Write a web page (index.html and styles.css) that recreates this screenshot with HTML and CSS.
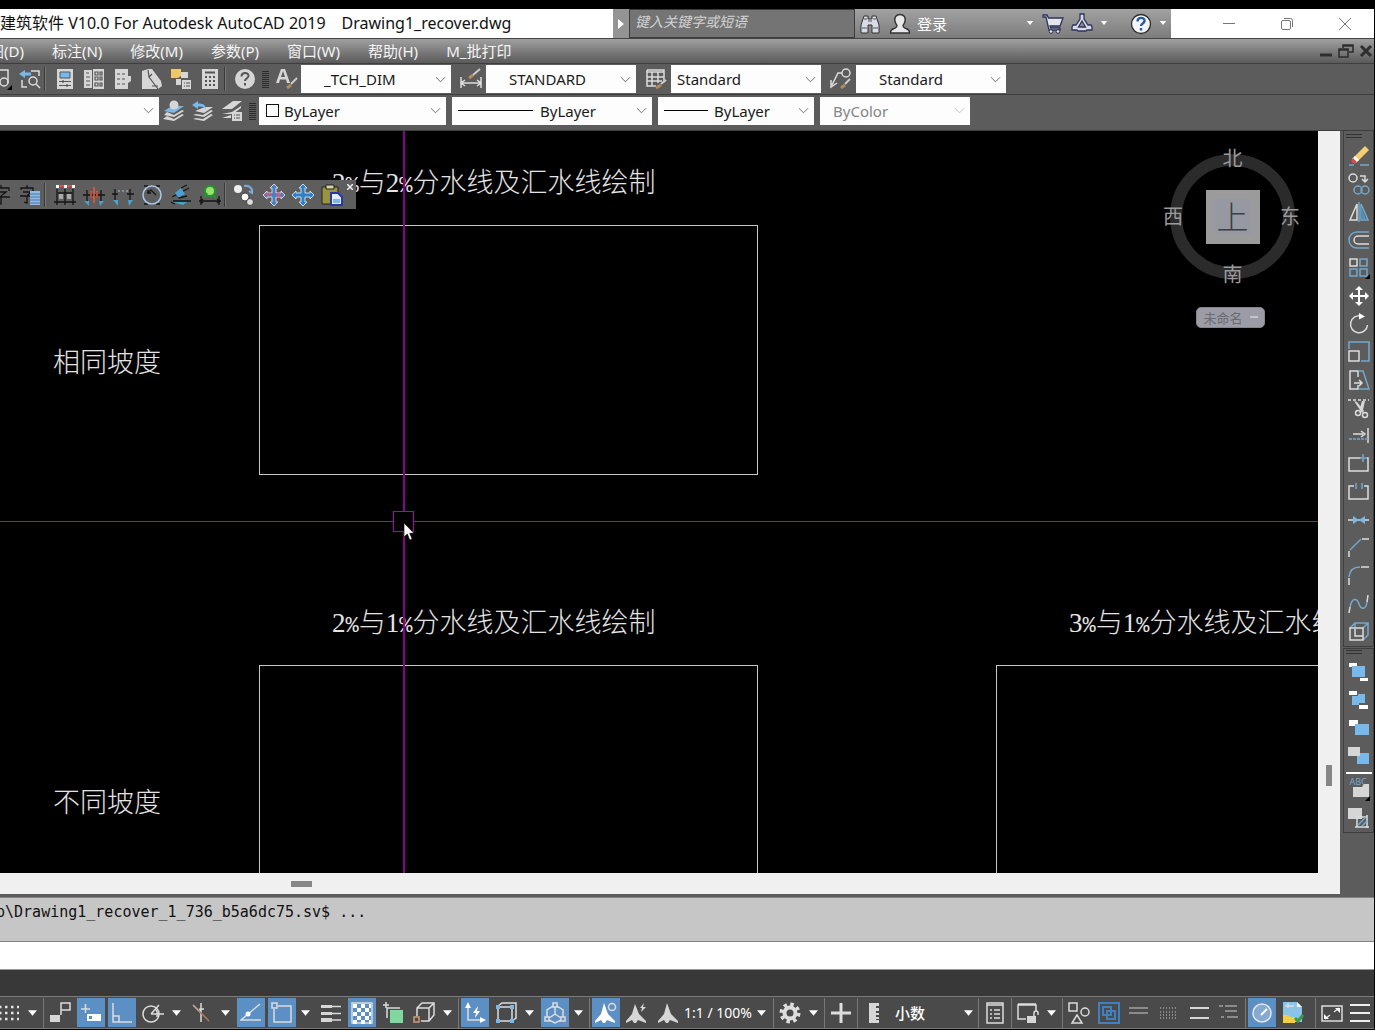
FILE: index.html
```html
<!DOCTYPE html>
<html lang="zh-CN">
<head>
<meta charset="utf-8">
<title>建筑软件 V10.0 For Autodesk AutoCAD 2019</title>
<link rel="stylesheet" href="styles.css">
</head>
<body>
<header class="titlebar">
  <h1 class="title"><span>建筑软件 V10.0 For Autodesk AutoCAD 2019</span><span>Drawing1_recover.dwg</span></h1>
  <div class="search">
    <button class="search-toggle" aria-label="折叠"><svg width="6" height="10" viewBox="0 0 6 10"><path class="fw" d="M0 0l6 5-6 5z"/></svg></button>
    <input class="search-box" type="text" aria-label="搜索" placeholder="键入关键字或短语">
  </div>
  <div class="info">
    <button class="tool" aria-label="查找"><svg viewBox="0 0 22 22"><path fill="#d8dce6" stroke="#333" d="M5 3h4v3h4V3h4l3 9v8h-7v-8H9v8H2v-8z"/><path class="dk" d="M3 15h5M14 15h5M5 6h3M14 6h3M9 8h4"/></svg></button>
    <button class="login"><svg viewBox="0 0 22 22"><path fill="#e8e8ec" stroke="#333" stroke-width="1.4" d="M11 1.500c4 0 6 3 5 7-.5 2-1.500 3-2 4 0 2 1 2 3 3 2 .7 3.500 1.500 3.500 4.500h-19c0-3 1.500-3.800 3.500-4.500 2-1 3-1 3-3-.5-1-1.500-2-2-4-1-4 1-7 5-7z"/></svg>登录</button>
    <span class="info-fill"></span>
    <button class="drop" aria-label="登录选项"><svg class="tri-s" viewBox="0 0 10 6"><path class="fw" d="M1 0h8L5 5z"/></svg></button>
    <button class="tool" aria-label="应用商店"><svg viewBox="0 0 22 22"><path fill="#e4e6ee" stroke="#2e3558" stroke-width="1.300" d="M1 2h4l1.500 3H21l-3 8H8l.5 2H18v2H7L4 4H1z"/><circle cx="9" cy="18.500" r="1.800" fill="#e4e6ee" stroke="#2e3558"/><circle cx="16" cy="18.500" r="1.800" fill="#e4e6ee" stroke="#2e3558"/></svg></button>
    <button class="tool" aria-label="Autodesk"><svg viewBox="0 0 22 22"><path fill="#d8dce8" stroke="#2e3558" stroke-width="1.300" d="M9 1h4v5l4 6h3l1 2v3h-5l-1 1H7l-1-1H1v-3l1-2h3l4-6z"/><path fill="#8e8e8e" stroke="#2e3558" stroke-width="1.300" d="M11 8l3.500 6h-7z"/></svg></button>
    <button class="drop" aria-label="Autodesk 选项"><svg class="tri-s" viewBox="0 0 10 6"><path class="fw" d="M1 0h8L5 5z"/></svg></button>
    <span class="info-gap"></span>
    <button class="tool" aria-label="帮助"><svg viewBox="0 0 22 22"><circle cx="11" cy="11" r="9.500" fill="#f4f6fa" stroke="#2b2b2b" stroke-width="1.300"/><path d="M7.500 8.500c0-5 7.500-4.500 7-.5-.3 2.500-3.500 2.500-3.500 5M11 15v2.500" fill="none" stroke="#2a5aa8" stroke-width="2.400"/></svg></button>
    <button class="drop" aria-label="帮助选项"><svg class="tri-s" viewBox="0 0 10 6"><path class="fw" d="M1 0h8L5 5z"/></svg></button>
  </div>
  <div class="winctl">
    <button aria-label="最小化"><svg viewBox="0 0 14 14"><path d="M1 6.500h12"/></svg></button>
    <button aria-label="还原"><svg viewBox="0 0 14 14"><rect x="1.500" y="3.500" width="9" height="9" rx="1.500"/><path d="M4 1.500h6.500a2 2 0 0 1 2 2V10"/></svg></button>
    <button aria-label="关闭"><svg viewBox="0 0 14 14"><path d="M1 1l12 12M13 1L1 13"/></svg></button>
  </div>
</header>

<nav class="menubar">
  <div class="menus">
    <button>绘图(D)</button><button>标注(N)</button><button>修改(M)</button><button>参数(P)</button><button>窗口(W)</button><button>帮助(H)</button><button>M_批打印</button>
  </div>
  <div class="docctl">
    <button aria-label="最小化图形"><svg viewBox="0 0 16 16"><path d="M2 12h12" stroke-width="3"/></svg></button>
    <button aria-label="还原图形"><svg viewBox="0 0 16 16"><path d="M1 6h9v8H1zM1 7h9M5 5V2h10v7h-4M5 3h10" stroke-width="1.600"/></svg></button>
    <button aria-label="关闭图形"><svg viewBox="0 0 16 16"><path d="M3 3l10 10M13 3L3 13" stroke-width="3"/></svg></button>
  </div>
</nav>

<section class="toolbars">
  <div class="bar bar-top">
    <div class="tools tools-cut">
      <button class="tool" aria-label="窗口缩放"><svg viewBox="0 0 22 22"><path class="s" d="M1 2h17v13M1 2v15h8"/><circle class="s" cx="14" cy="14" r="4"/><path class="fk" d="M22 17v5h-5z"/></svg></button>
      <button class="tool" aria-label="缩放上一个"><svg viewBox="0 0 22 22"><path class="s" d="M12 3h8v5M3 12v7h5"/><circle class="s" cx="14" cy="13" r="4"/><path class="s" d="M17 16l4 4"/><path class="fb" d="M0 6l6-4v2.500h6v3H6V10z"/></svg></button>
      <i class="sep"></i>
      <button class="tool" aria-label="特性"><svg viewBox="0 0 22 22"><path class="f" d="M3 1h16v20H3z"/><path class="fb" stroke="#555" d="M6 4h10v6H6z"/><path class="dk" d="M5 13.500h12M5 17.500h12M9 12v3M13 16v3"/></svg></button>
      <button class="tool" aria-label="设计中心"><svg viewBox="0 0 22 22"><path class="f" d="M1 2h8v18H1zM10 1h11v20H10z"/><path class="dk" d="M3 5h3M3 9h4M3 13h4M3 17h4M12 4h3v3h-3zM17 4h2v3h-2zM12 9h3v3h-3zM17 9h2v3h-2zM12 15h3v3h-3zM17 15h2v3h-2z"/></svg></button>
      <button class="tool" aria-label="工具选项板"><svg viewBox="0 0 22 22"><path class="f" d="M3 1h13v7h3v5l-3 2v6H3z"/><path class="dk" stroke-width="2" d="M5 6h3M10 6h3M5 11h3M10 11h3M5 16h3M10 16h3"/></svg></button>
      <button class="tool" aria-label="图纸集"><svg viewBox="0 0 22 22"><path class="f" d="M1 3l6-2h4l9 12 1 5-4 3H1z"/><path class="dk" d="M7 2l1 7 9 12M8 9l3-3M11 18h6"/></svg></button>
      <button class="tool" aria-label="标记集"><svg viewBox="0 0 22 22"><path fill="#f0c66a" d="M1 1h10v7l-3 2H1z"/><path class="f" d="M11 4h7v6h-7zM6 11h5v6H6zM12 12h9v9h-9z"/><path class="dk" d="M14 15h1M16 15h4M14 18h1M16 18h4"/></svg></button>
      <button class="tool" aria-label="计算器"><svg viewBox="0 0 22 22"><path class="f" d="M3 1h16v20H3z"/><path class="dk wide" d="M6 4.500h10M6 9h2M10 9h2M14 9h2M6 13h2M10 13h2M14 13h2M6 17h2M10 17h2M14 17h2"/></svg></button>
      <i class="sep"></i>
      <button class="tool" aria-label="帮助"><svg viewBox="0 0 22 22"><circle class="f" cx="11" cy="11" r="10"/><path class="dk wide" d="M7.500 8.500c0-5 7.500-4.500 7-.5-.3 2.500-3.500 2.500-3.500 5M11 15v2.500"/></svg></button>
    </div>
    <i class="grip"></i>
    <button class="tool" aria-label="文字样式"><svg viewBox="0 0 22 22"><path class="f" fill-rule="evenodd" d="M0 15L5 1h4l5 14h-3l-1-3.500H4L3 15zM5 9h4L7 3z"/><path stroke="#b58a5a" stroke-width="3" d="M11 20l4-3"/><path stroke="#ccc" stroke-width="2" d="M15 16l6-6"/></svg></button>
    <label class="combo combo-pad w150"><select aria-label="文字样式列表"><option>_TCH_DIM</option></select><svg class="chev" viewBox="0 0 12 7"><path d="M1 1l5 5 5-5"/></svg></label>
    <button class="tool tool-lead" aria-label="标注样式"><svg viewBox="0 0 22 22"><path class="s" d="M1 9v11M21 9v11M1 15h20M5 12l-4 3 4 3M17 12l4 3-4 3"/><path stroke="#b58a5a" stroke-width="3" d="M9 10l4-3"/><path stroke="#ccc" stroke-width="2" d="M13 7l7-6"/></svg></button>
    <label class="combo combo-pad w150"><select aria-label="标注样式列表"><option>STANDARD</option></select><svg class="chev" viewBox="0 0 12 7"><path d="M1 1l5 5 5-5"/></svg></label>
    <button class="tool tool-lead" aria-label="表格样式"><svg viewBox="0 0 22 22"><path class="s" d="M2 2h17v12M2 2v16h9M2 4h17M2 9h17M2 13h15M7 4v14M13 4v11"/><path stroke="#b58a5a" stroke-width="3" d="M11 20l5-3"/><path stroke="#ccc" stroke-width="2" d="M16 16l5-4"/></svg></button>
    <label class="combo w150"><select aria-label="表格样式列表"><option>Standard</option></select><svg class="chev" viewBox="0 0 12 7"><path d="M1 1l5 5 5-5"/></svg></label>
    <button class="tool tool-lead" aria-label="引线样式"><svg viewBox="0 0 22 22"><circle class="s" cx="16" cy="5" r="4"/><path class="s" d="M12 5H8L2 17M1 12v7l6-4"/><path stroke="#b58a5a" stroke-width="3" d="M11 20l4-3"/><path stroke="#ccc" stroke-width="2" d="M15 16l5-5"/></svg></button>
    <label class="combo combo-pad w150"><select aria-label="引线样式列表"><option>Standard</option></select><svg class="chev" viewBox="0 0 12 7"><path d="M1 1l5 5 5-5"/></svg></label>
  </div>
  <div class="bar">
    <label class="combo w160"><select aria-label="图层"><option></option></select><svg class="chev" viewBox="0 0 12 7"><path d="M1 1l5 5 5-5"/></svg></label>
    <div class="tools">
      <button class="tool" aria-label="置为当前图层"><svg viewBox="0 0 22 22"><path class="f" d="M4 16l-4 3 11 2 10-6-2-1-8 5z"/><path class="f" d="M4 12l-3 3 10 2 10-6-2-1-8 5z"/><path class="fb" d="M1 11L9 6h12L11 13z"/><circle class="f" cx="11" cy="5" r="4.500"/></svg></button>
      <button class="tool" aria-label="上一个图层"><svg viewBox="0 0 22 22"><path class="f" d="M4 18l-3 1 11 2 9-6-2-1-8 5zM4 14l-3 1 11 2 9-6-2-1-8 5zM3 11l5-2 5-2h8L12 13z"/><path class="fb" d="M0 5l6-4v2.500c6 0 8 2 8 6-2-3-4-3-8-3V9z"/></svg></button>
      <button class="tool" aria-label="图层状态"><svg viewBox="0 0 22 22"><path class="f" d="M1 9L12 1h9L11 9zM1 14l10-2 9-6v2l-8 6zM1 18h9v-3zM11 12h10v9H11z"/><path class="dk" d="M13 15h1M15 15h4M13 18h1M15 18h4"/></svg></button>
    </div>
    <i class="grip"></i>
    <label class="combo combo-color w188"><select aria-label="颜色"><option>ByLayer</option></select><i class="swatch"></i><svg class="chev" viewBox="0 0 12 7"><path d="M1 1l5 5 5-5"/></svg></label>
    <label class="combo combo-type w200"><select aria-label="线型"><option>ByLayer</option></select><i class="line line-long"></i><svg class="chev" viewBox="0 0 12 7"><path d="M1 1l5 5 5-5"/></svg></label>
    <label class="combo combo-weight w156"><select aria-label="线宽"><option>ByLayer</option></select><i class="line"></i><svg class="chev" viewBox="0 0 12 7"><path d="M1 1l5 5 5-5"/></svg></label>
    <label class="combo combo-off w150"><select aria-label="打印样式" disabled><option>ByColor</option></select><svg class="chev" viewBox="0 0 12 7"><path d="M1 1l5 5 5-5"/></svg></label>
  </div>
</section>

<main class="work">
  <div class="view">
    <div class="canvas">
      <svg class="drawing" width="100%" height="100%"><g fill="none" stroke="#c8c8c8"><rect x="259.500" y="94.500" width="498" height="249"/><rect x="259.500" y="534.500" width="498" height="249"/><rect x="996.500" y="534.500" width="498" height="249"/></g></svg>
      <p class="note head-a">2<b>%</b>与2<b>%</b>分水线及汇水线绘制</p>
      <p class="note head-b">2<b>%</b>与1<b>%</b>分水线及汇水线绘制</p>
      <p class="note head-c">3<b>%</b>与1<b>%</b>分水线及汇水线绘制</p>
      <p class="note side-a">相同坡度</p>
      <p class="note side-b">不同坡度</p>
      <div class="compass">
        <span class="north">北</span><span class="west">西</span><button class="cube">上</button><span class="east">东</span><span class="south">南</span>
      </div>
      <button class="ucs">未命名<svg width="8" height="4" viewBox="0 0 8 4"><path d="M0 1h8" stroke="#c4c4cc" stroke-width="2"/></svg></button>
      <i class="cross-h"></i><i class="cross-v"></i><i class="pick"></i>
      <svg class="cursor" width="12" height="19" viewBox="0 0 12 19"><path fill="#fff" stroke="#000" stroke-width=".6" d="M1 1v14l3.300-3 2.500 6 2.400-1-2.500-5.700H11z"/></svg>
      <div class="floating">
        <button class="tool" aria-label="单行文字"><svg viewBox="0 0 22 22"><path class="ink" d="M3 6V4h16v3M11 1v3M6 8h10l-5 4v8l-3-1M2 13h18"/></svg></button>
        <button class="tool" aria-label="多行文字"><svg viewBox="0 0 22 22"><path class="ink" d="M2 6V4h12v3M8 1v3M4 8h8L8 12v7l-3-1M1 12h13"/><path fill="#8ebbe8" d="M11 7h10v14H11z"/><path stroke="#5276a0" d="M11 10h10M11 13h10M11 16h10M11 19h10"/></svg></button>
        <i class="sep"></i>
        <button class="tool" aria-label="门窗标注"><svg viewBox="0 0 22 22"><path class="ink" d="M3 5v16M11 5v16M19 5v16M0 18h22M4 9h14"/><path fill="#aaa" d="M5 10h4v5H5zM13 10h4v5h-4z"/><path stroke="#e44" stroke-width="2" d="M2 2h19"/><path fill="#fff" d="M2 1h3v3H2zM10 1h3v3h-3zM18 1h3v3h-3z"/></svg></button>
        <button class="tool" aria-label="墙厚标注"><svg viewBox="0 0 22 22"><path class="ink" d="M4 6v11M18 6v11M0 11h22M8 8v6M14 8v6"/><path d="M11 3v16M8 7v7M14 7v7" stroke="#f05a3c" stroke-width="1.500"/><path fill="#4aa0d0" d="M1 17h5v5zM16 17h5l-4 5z"/></svg></button>
        <button class="tool" aria-label="两点标注"><svg viewBox="0 0 22 22"><path class="ink" d="M3 5v11M18 5v11M0 10h6M15 10h7"/><path stroke="#9cc" stroke-dasharray="2 2" d="M6 7h10"/><path fill="#4aa0d0" d="M1 16h5v6zM16 16h5l-4 6z"/></svg></button>
        <button class="tool" aria-label="半径标注"><svg viewBox="0 0 22 22"><path class="ink" d="M3 2h4M15 2h4M3 20h4M15 20h4M6 9l4-3 5 5M7 6v3h3"/><circle cx="11" cy="11" r="9" fill="none" stroke="#a8c4e6" stroke-width="1.600"/></svg></button>
        <button class="tool" aria-label="尺寸编辑"><svg viewBox="0 0 22 22"><path class="ink" d="M2 13L19 4M3 17h18M8 14l5-3M1 18l4 2"/><path fill="#4aa0d0" d="M5 9l6-5 4 6-6 4zM2 18h15l-4 3z"/><path class="ink" d="M11 4l6-3M9 14l8-2"/></svg></button>
        <button class="tool" aria-label="坐标标注"><svg viewBox="0 0 22 22"><path class="ink" d="M2 12v9M20 12v9M0 17h22M4 15l-3 2 3 2M18 15l3 2-3 2"/><circle cx="11" cy="7" r="5" fill="#9be070" stroke="#1f9a28" stroke-width="2"/><path stroke="#1f9a28" stroke-width="2" d="M5 13l3-4M14 11l3 3"/></svg></button>
        <i class="sep"></i>
        <button class="tool" aria-label="替换"><svg viewBox="0 0 22 22"><path fill="none" stroke="#78aee0" stroke-width="2" d="M10 2c6-1 9 3 8 7l-3-2"/><circle cx="4" cy="5" r="4" fill="#eee"/><circle cx="11" cy="13" r="4" fill="#fff" stroke="#444"/><circle cx="16" cy="18" r="3.500" fill="#ddd" stroke="#444"/></svg></button>
        <button class="tool" aria-label="移动复制"><svg viewBox="0 0 22 22"><path fill="#3d85c8" stroke="#e6cada" d="M11 0l4 4h-2v5h5V7l4 4-4 4v-2h-5v5h2l-4 4-4-4h2v-5H4v2l-4-4 4-4v2h5V4H7z"/><path fill="#e0507a" d="M4 8l-3 3 3 3v-2h5V9H4zM13 9h5v4h-5z" opacity=".7"/></svg></button>
        <button class="tool" aria-label="移动"><svg viewBox="0 0 22 22"><path fill="#2f80c8" stroke="#c4dcf0" d="M11 0l4 4h-2v5h5V7l4 4-4 4v-2h-5v5h2l-4 4-4-4h2v-5H4v2l-4-4 4-4v2h5V4H7z"/></svg></button>
        <button class="tool" aria-label="粘贴"><svg viewBox="0 0 22 22"><path fill="#9a9440" stroke="#222" d="M1 3h16v17H1z"/><path fill="#d8d4a0" stroke="#222" d="M5 1h8v4H5z"/><path fill="#e8e8ff" stroke="#2838a8" stroke-width="2" d="M10 9h7l4 4v8H10z"/><path class="fb" d="M12 15h7v4h-7z"/></svg></button>
        <button class="close" aria-label="关闭工具栏"><svg width="6" height="6" viewBox="0 0 6 6"><path d="M0 0l6 6M6 0L0 6" stroke="#eee" stroke-width="1.500"/></svg></button>
      </div>
    </div>
    <div class="vscroll"><i></i></div>
    <div class="hscroll"><i></i></div>
  </div>
  <aside class="side">
    <div class="panel">
      <i class="grip-h"></i>
      <button class="tool" aria-label="删除"><svg viewBox="0 0 22 22"><path class="sb" d="M1 20h5M12 20h9"/><path fill="#f3cf72" d="M17 1l4 4L10 16l-4-4z"/><path fill="#fff" d="M7 11l4 4-3 3-4-4z"/><path fill="#e04850" d="M5 13l4 4-3 2-3-3z"/></svg></button>
      <button class="tool" aria-label="复制"><svg viewBox="0 0 22 22"><circle class="s" cx="5" cy="5" r="4"/><path class="s" d="M12 3h5v5M14 6l3 3 3-3"/><circle class="sb" cx="10" cy="17" r="4"/><circle class="sb" cx="17" cy="17" r="4"/></svg></button>
      <button class="tool" aria-label="镜像"><svg viewBox="0 0 22 22"><path class="s" d="M9 3v16H2z"/><path class="sb" d="M13 3v16h7zM11 1v20" /><path fill="#528fb8" d="M13 5v13h5z"/></svg></button>
      <button class="tool" aria-label="偏移"><svg viewBox="0 0 22 22"><path class="sb" stroke-width="2" d="M21 3H9a8 8 0 0 0 0 16h12"/><path class="s" d="M21 7H10a4 4 0 0 0 0 8h11"/></svg></button>
      <button class="tool" aria-label="阵列"><svg viewBox="0 0 22 22"><path class="s" d="M2 2h7v7H2z"/><path class="sb" d="M12 2h7v7h-7zM2 12h7v7H2zM12 12h7v7h-7z"/><path class="fk" d="M22 17v5h-5z"/></svg></button>
      <button class="tool" aria-label="移动"><svg viewBox="0 0 22 22"><path class="fw" d="M11 1l4 4h-3v5h5V7l4 4-4 4v-3h-5v5h3l-4 4-4-4h3v-5H5v3l-4-4 4-4v3h5V5H7z"/></svg></button>
      <button class="tool" aria-label="旋转"><svg viewBox="0 0 22 22"><path class="s" d="M13 3A8.500 8.500 0 1 0 19.500 12"/><path class="fw" d="M11 0l6 3.500-6 3z"/></svg></button>
      <button class="tool" aria-label="缩放"><svg viewBox="0 0 22 22"><path class="sb" d="M1 8V1h20v19h-8"/><path class="s" d="M1 10h10v10H1z"/></svg></button>
      <button class="tool" aria-label="拉伸"><svg viewBox="0 0 22 22"><path class="s" d="M10 8V2H2v18h8v-4"/><path class="sb" d="M11 2h4l6 18H11"/><path class="s" d="M6 14h8M11 11l3 3-3 3"/></svg></button>
      <button class="tool" aria-label="修剪"><svg viewBox="0 0 22 22"><path class="s" stroke-dasharray="3 2" d="M0 3h21"/><path class="f" d="M6 4l3 1 7 9-2 2zM14 4h3l-2 9-3-2z"/><circle class="s" cx="10" cy="16" r="2.500"/><circle class="s" cx="17" cy="18" r="2.500"/></svg></button>
      <button class="tool" aria-label="延伸"><svg viewBox="0 0 22 22"><path class="s" d="M20 3v15M5 9h10M13 6l4 3-4 3"/><path class="sb" stroke-dasharray="3 1" d="M1 14h19"/></svg></button>
      <button class="tool" aria-label="打断于点"><svg viewBox="0 0 22 22"><path class="s" d="M13 5H1v13h19V5h-1"/><path class="sb" d="M15 1v8M12 5h7"/></svg></button>
      <button class="tool" aria-label="打断"><svg viewBox="0 0 22 22"><path class="s" d="M6 5H1v13h19V5h-4"/><path class="sb" d="M8 2v6M14 2v6"/></svg></button>
      <button class="tool" aria-label="合并"><svg viewBox="0 0 22 22"><path class="s" d="M0 11h21"/><path class="fb" d="M5 7l6 4-6 4zM17 7l-6 4 6 4z"/></svg></button>
      <button class="tool" aria-label="倒角"><svg viewBox="0 0 22 22"><path class="s" d="M1 20v-6M14 2h7"/><path class="sb" d="M2 13L13 2"/></svg></button>
      <button class="tool" aria-label="圆角"><svg viewBox="0 0 22 22"><path class="s" d="M1 20v-7M13 2h8"/><path class="sb" d="M1 12Q2 2 12 2"/></svg></button>
      <button class="tool" aria-label="光顺曲线"><svg viewBox="0 0 22 22"><path class="s" d="M1 20l1-6M19 9l1-7"/><path class="sb" d="M2 14c2-10 7-9 9-3s7 6 8-2"/></svg></button>
      <button class="tool" aria-label="分解"><svg viewBox="0 0 22 22"><path class="sb" d="M2 7l5-5h13v12l-5 5M15 7l5-5M7 2v5"/><path class="s" d="M2 7h13v12H2zM7 8v7h8"/></svg></button>
    </div>
    <div class="panel panel-order">
      <i class="grip-h"></i>
      <button class="tool" aria-label="前置"><svg viewBox="0 0 22 22"><path class="fw" d="M1 2h8v4H1zM12 17h8v3h-8z"/><path class="fb" d="M4 5h13v11H4z"/></svg></button>
      <button class="tool" aria-label="后置"><svg viewBox="0 0 22 22"><path class="fw" d="M1 2h8v4H1zM11 16h9v4h-9z"/><path class="fb" d="M4 7h6V5h7v9h-6v2H4z"/></svg></button>
      <button class="tool" aria-label="置于对象之上"><svg viewBox="0 0 22 22"><path class="fw" d="M1 3h9v6H1z"/><path class="fb" d="M7 7h14v11H7z"/></svg></button>
      <button class="tool" aria-label="置于对象之下"><svg viewBox="0 0 22 22"><path class="fb" d="M9 8h12v11H9z"/><path class="f" d="M0 2h12v9H0z"/></svg></button>
      <i class="rule"></i>
      <button class="tool tool-abc" aria-label="文字前置"><span>ABC</span><svg viewBox="0 0 22 22"><path class="f" d="M5 8h9l2-3h5v13H5z"/><path class="fk" d="M22 17v5h-5z"/></svg></button>
      <button class="tool" aria-label="图案填充后置"><svg viewBox="0 0 22 22"><path class="f" d="M0 1h14v11H0z"/><path class="s" d="M9 10h10v10H9zM7 20h14M19 8v13"/><path class="sb" d="M10 18l8-8M14 19l5-5"/></svg></button>
    </div>
  </aside>
</main>

<section class="command">
  <output class="history">p\Drawing1_recover_1_736_b5a6dc75.sv$ ...</output>
  <input class="prompt" type="text" aria-label="命令">
</section>

<footer class="status">
  <div class="pair"><button class="st" aria-label="栅格"><svg viewBox="0 0 22 22"><path fill="none" stroke="#e4e4e4" stroke-width="2.500" stroke-dasharray="2.500 3.500" d="M1 5h20M1 11h20M1 17h20"/></svg></button><button class="dd" aria-label="栅格选项"><svg viewBox="0 0 10 6"><path class="fw" d="M0 0h10L5 6z"/></svg></button></div>
  <i class="vs"></i>
  <button class="st" aria-label="推断约束"><svg viewBox="0 0 22 22"><path class="s" d="M12 8V1h9v7h-9v5"/><path class="f" d="M1 13h10v7H1z"/></svg></button>
  <button class="st on" aria-label="动态输入"><svg viewBox="0 0 22 22"><path class="s" d="M1 7h9M5.500 2v9"/><path class="fw" d="M7 12h14v7H7z"/><path fill="#5c8fc4" d="M9 14h3v3H9z"/></svg></button>
  <button class="st on" aria-label="正交"><svg viewBox="0 0 22 22"><path class="s" d="M2 1v19h19M2 14h6v6"/></svg></button>
  <div class="pair"><button class="st" aria-label="极轴"><svg viewBox="0 0 22 22"><circle class="s" cx="9" cy="12" r="8"/><path class="s" d="M9 12h13M9 12l8-9M13 7q3 2 2 8"/></svg></button><button class="dd" aria-label="极轴选项"><svg viewBox="0 0 10 6"><path class="fw" d="M0 0h10L5 6z"/></svg></button></div>
  <div class="pair"><button class="st" aria-label="等轴测"><svg viewBox="0 0 22 22"><path class="s" d="M10 1v19M13 7h-4v4"/><path stroke="#a87860" stroke-width="1.500" d="M2 3l16 16"/><path class="s" opacity=".5" d="M2 3l6 6"/></svg></button><button class="dd" aria-label="等轴测选项"><svg viewBox="0 0 10 6"><path class="fw" d="M0 0h10L5 6z"/></svg></button></div>
  <button class="st on" aria-label="对象捕捉追踪"><svg viewBox="0 0 22 22"><path class="s" d="M20 2L1 18h20"/><circle class="fw" cx="8" cy="12" r="2.500"/></svg></button>
  <div class="pair"><button class="st on" aria-label="对象捕捉"><svg viewBox="0 0 22 22"><path class="s" d="M7 4h13v16H3V7"/><path class="s" d="M1 1h5v5H1z"/></svg></button><button class="dd" aria-label="捕捉选项"><svg viewBox="0 0 10 6"><path class="fw" d="M0 0h10L5 6z"/></svg></button></div>
  <button class="st" aria-label="线宽"><svg viewBox="0 0 22 22"><path class="f" d="M1 3h11v3H1zM1 10h11v3H1zM1 16h11v4H1z"/><path class="s" d="M12 4.500h9M12 11.500h9M12 18h9"/></svg></button>
  <button class="st on" aria-label="透明度"><svg viewBox="0 0 22 22"><path class="s" d="M1 1h20v20H1z"/><path fill="none" stroke="#fff" stroke-width="4" stroke-dasharray="4 4" d="M2 4h18M6 8h14M2 12h18M6 16h14M2 20h18"/></svg></button>
  <button class="st" aria-label="选择循环"><svg viewBox="0 0 22 22"><path class="s" d="M5 16V6h13M1 3h6M4 0v6"/><path fill="#7fd8a0" d="M8 8h13v13H8z"/></svg></button>
  <div class="pair"><button class="st" aria-label="三维对象捕捉"><svg viewBox="0 0 22 22"><path class="s" d="M4 14V6l5-5h12v12l-5 6H8M4 6h12v13M16 6l5-5"/><path fill="none" stroke="#d09a78" stroke-width="1.500" d="M1 15h5v5H1z"/></svg></button><button class="dd" aria-label="三维捕捉选项"><svg viewBox="0 0 10 6"><path class="fw" d="M0 0h10L5 6z"/></svg></button></div>
  <i class="vs"></i>
  <button class="st on" aria-label="动态 UCS"><svg viewBox="0 0 22 22"><path class="s" d="M4 4v14h14"/><path class="fw" d="M4 0l3 6H1zM22 18l-6-3v6zM14 4l-5 7h3l-1 5 5-7h-3z"/></svg></button>
  <div class="pair"><button class="st" aria-label="选择过滤"><svg viewBox="0 0 22 22"><path class="s" d="M3 5h14v14H3zM3 4l4-3h14v15l-4 3"/><path class="fb" d="M1 3h4v4H1zM15 3h4v4h-4zM1 17h4v4H1zM15 17h4v4h-4z"/></svg></button><button class="dd" aria-label="过滤选项"><svg viewBox="0 0 10 6"><path class="fw" d="M0 0h10L5 6z"/></svg></button></div>
  <div class="pair"><button class="st on" aria-label="小控件"><svg viewBox="0 0 22 22"><path class="s" d="M9 1h4v4H9zM1 15h4v4H1zM17 15h4v4h-4zM11 5v7l-6 4M11 12l6 4M3 15V8l6-4M19 15V8l-6-4M5 18l6 3 6-3"/></svg></button><button class="dd" aria-label="小控件选项"><svg viewBox="0 0 10 6"><path class="fw" d="M0 0h10L5 6z"/></svg></button></div>
  <i class="vs"></i>
  <button class="st on" aria-label="注释可见性"><svg viewBox="0 0 22 22"><path class="fw" d="M9 1l4 11 7 7v2l-8-3-2 3H8l-2-3-6 3v-2l6-7z"/><circle class="s" cx="17" cy="5" r="3.500"/></svg></button>
  <button class="st" aria-label="自动缩放"><svg viewBox="0 0 22 22"><path class="f" d="M9 2l4 10 7 7v2l-8-3-2 3H8l-2-3-6 3v-2l6-7zM18 1l-4 5h2l-1 4 5-5h-3z"/></svg></button>
  <button class="st" aria-label="注释比例图标"><svg viewBox="0 0 22 22"><path class="f" d="M10 1l4 11 7 7v2l-8-3-2 3H9l-2-3-6 3v-2l6-7z"/></svg></button>
  <button class="scale">1:1 / 100%<svg viewBox="0 0 10 6"><path class="fw" d="M0 0h10L5 6z"/></svg></button>
  <i class="vs"></i>
  <div class="pair"><button class="st" aria-label="切换工作空间"><svg viewBox="0 0 22 22"><circle cx="11" cy="11" r="8.500" fill="none" stroke="#ddd" stroke-width="4" stroke-dasharray="3.400 3.280"/><circle cx="11" cy="11" r="5.500" fill="none" stroke="#ddd" stroke-width="4"/></svg></button><button class="dd" aria-label="工作空间选项"><svg viewBox="0 0 10 6"><path class="fw" d="M0 0h10L5 6z"/></svg></button></div>
  <i class="vs"></i>
  <button class="st" aria-label="注释监视器"><svg viewBox="0 0 22 22"><path stroke="#ddd" stroke-width="3" d="M11 1v20M1 11h20"/></svg></button>
  <i class="vs"></i>
  <button class="st" aria-label="单位"><svg viewBox="0 0 22 22"><path class="f" d="M6 1h10v3h-3v2h3v3h-3v2h3v2h-3v2h3v2h-3v1h3v3H6z"/></svg></button>
  <label class="units"><select aria-label="单位格式"><option>小数</option></select><svg viewBox="0 0 10 6"><path class="fw" d="M0 0h10L5 6z"/></svg></label>
  <i class="vs"></i>
  <button class="st" aria-label="快捷特性"><svg viewBox="0 0 22 22"><path class="s" d="M3 1h16v20H3zM3 3h16M6 8h2M10 8h6M6 12h2M10 12h6M6 16h2M10 16h6"/></svg></button>
  <i class="vs"></i>
  <div class="pair"><button class="st" aria-label="锁定界面"><svg viewBox="0 0 22 22"><path class="s" d="M9 17H1V3h18v6M1 2h18"/><path class="f" d="M10 14h9v7h-9z"/><path class="s" d="M17 14v-3a2 2 0 0 1 4 0v2"/></svg></button><button class="dd" aria-label="锁定选项"><svg viewBox="0 0 10 6"><path class="fw" d="M0 0h10L5 6z"/></svg></button></div>
  <i class="vs"></i>
  <div class="dense">
    <button class="st" aria-label="隔离对象"><svg viewBox="0 0 22 22"><path class="s" d="M1 1h8v8H1zM9 13l5 8H4z"/><circle class="s" cx="17" cy="10" r="4"/></svg></button>
    <button class="st" aria-label="组"><svg viewBox="0 0 22 22"><path fill="none" stroke="#3f80c0" stroke-width="2" d="M1 1h20v20H1zM5 5h8v8H5zM9 9h8v8H9z"/></svg></button>
    <button class="st dim" aria-label="细线"><svg viewBox="0 0 22 22"><path class="s" d="M1 6h19M1 11h19"/></svg></button>
    <button class="st dim" aria-label="虚线"><svg viewBox="0 0 22 22"><path class="s" stroke-dasharray="1 2" d="M2 6h17M2 10h17M2 13h17M2 16h17"/></svg></button>
    <button class="st" aria-label="粗线"><svg viewBox="0 0 22 22"><path class="f" d="M2 5h19v2H2zM2 15h19v2H2z"/></svg></button>
    <button class="st dim" aria-label="列表"><svg viewBox="0 0 22 22"><path class="s" d="M1 4h4M7 4h12M7 9h12M9 15h11M3 15h3"/></svg></button>
  </div>
  <i class="vs"></i>
  <button class="st on" aria-label="硬件加速"><svg viewBox="0 0 22 22"><circle cx="11" cy="11" r="9" fill="#84aad2" stroke="#e4e4e4" stroke-width="1.500"/><path stroke="#fff" stroke-width="2" d="M10 13l6-6"/></svg></button>
  <button class="st" aria-label="文件状态"><svg viewBox="0 0 22 22"><path fill="#8cc4e8" d="M1 0h14l5 5v15H1z"/><path fill="#f0f6fa" d="M15 0l5 5h-5z"/><path class="s" d="M6 1v5M3 4h9"/><path fill="#f4d040" d="M1 13h5l2 2h5v6H1z"/><path fill="none" stroke="#3c9a4a" stroke-width="3" d="M13 16l3 3 5-6"/></svg></button>
  <i class="vs vs-push"></i>
  <div class="pair">
    <button class="st" aria-label="全屏显示"><svg viewBox="0 0 22 22"><path class="s" d="M1 4h20v15H1zM13 10l5-4M9 13l-5 4"/><path class="fw" d="M14 6h5v5zM3 12v5h5z"/></svg></button>
    <button class="st" aria-label="自定义"><svg viewBox="0 0 22 22"><path stroke="#eee" stroke-width="2" d="M1 3h20M1 11h20M1 19h20"/></svg></button>
  </div>
</footer>
</body>
</html>
```
FILE: styles.css
```css
* { box-sizing: border-box; }
body {
  margin: 0;
  height: 100vh;
  display: flex;
  flex-direction: column;
  overflow: hidden;
  padding: 9px 1px 1px 0;
  background: #000;
  color: #fff;
  font: 15px/20px "Noto Sans", "Noto Sans CJK SC", sans-serif;
}
button, input, select { font: inherit; color: inherit; border: 0; border-radius: 0; padding: 0; margin: 0; background: none; outline: 0; }
button { flex: none; display: flex; align-items: center; justify-content: center; white-space: nowrap; }
svg { display: block; flex: none; }
i { display: block; }

/* shared icon paints */
.s { fill: none; stroke: #dcdcdc; stroke-width: 1.5px; }
.sb { fill: none; stroke: #74a8cc; stroke-width: 1.5px; }
.dk { fill: none; stroke: #555; stroke-width: 1.2px; }
.dk.wide { stroke-width: 2px; }
.ink { fill: none; stroke: #151515; stroke-width: 1.3px; }
.f { fill: #d6d6d6; }
.fb { fill: #78b8ea; }
.fw { fill: #fff; }
.fk { fill: #000; }

/* title bar */
.titlebar { flex: none; display: flex; height: 30px; border-bottom: 1px solid #444; background: #fff; }
.title { flex: 1; display: flex; gap: 16px; margin: 0; font-size: 16px; font-weight: 400; line-height: 29px; color: #111; white-space: nowrap; overflow: hidden; }
.search { display: flex; background: #949494; }
.search-toggle { width: 16px; }
.search-box { width: 226px; padding: 0 5px 4px; border: 1px solid #3c3c3c; background: #747474; font-size: 14px; }
.search-box::placeholder { color: #d2d2d2; font-style: italic; opacity: 1; }
.info { display: flex; align-items: center; width: 316px; background: linear-gradient(#a2a2a2, #7c7c7c); }
.tool { width: 29px; height: 28px; }
.tool svg { width: 22px; height: 22px; }
.login { gap: 6px; margin-left: 5px; }
.login svg { width: 22px; height: 22px; }
.info-fill { flex: 1; }
.drop { width: 16px; height: 28px; }
.tri-s { width: 8px; height: 5px; }
.info-gap { width: 14px; }
.winctl { display: flex; width: 203px; justify-content: flex-end; background: #fff; }
.winctl button { width: 58px; }
.winctl svg { width: 14px; height: 14px; fill: none; stroke: #777; }

/* menu bar */
.menubar { flex: none; display: flex; justify-content: space-between; height: 24px; overflow: hidden; background: linear-gradient(#a0a0a0, #5a5a5a); }
.menus { display: flex; gap: 28px; margin-left: -26px; }
.menus button { font-size: 15px; color: #f4f4f4; }
.docctl { display: flex; gap: 4px; align-items: center; }
.docctl svg { width: 16px; height: 16px; fill: none; stroke: #2e2e2e; }

/* tool rows */
.toolbars { flex: none; background: #5c5c5c; padding-bottom: 4px; border-bottom: 1px solid #3e3e3e; overflow: hidden; }
.bar { display: flex; align-items: center; height: 32px; border-top: 1px solid #3e3e3e; }
.bar-top { height: 31px; }
.tools { display: flex; align-items: center; }
.tools-cut { margin-left: -14px; }
.sep { width: 6px; height: 24px; border-left: 1px solid #3a3a3a; border-right: 4px solid #5c5c5c; background: #777; }
.grip { flex: none; width: 7px; height: 18px; margin: 0 3px; background: repeating-linear-gradient(#5c5c5c 0 1px, #2c2c2c 1px 2px); }
.combo { display: grid; align-items: center; height: 28px; background: #fdfdfd; color: #1a1a1a; }
.combo > * { grid-area: 1 / 1; }
.combo select { appearance: none; width: 100%; height: 28px; padding-left: 6px; }
.combo-pad select { padding-left: 23px; }
.chev { justify-self: end; width: 11px; height: 7px; margin-right: 5px; fill: none; stroke: #666; pointer-events: none; }
.w150 { width: 150px; }
.w156 { width: 156px; }
.w160 { width: 159px; }
.w188 { width: 187px; }
.w200 { width: 200px; }
.tool-lead { margin: 0 1px 0 5px; }
.combo + .combo { margin-left: 6px; }
.combo-color select { padding-left: 25px; }
.swatch { width: 13px; height: 13px; margin-left: 7px; border: 1px solid #111; pointer-events: none; }
.combo-type select { padding-left: 88px; }
.combo-weight select { padding-left: 56px; }
.line { width: 44px; height: 1px; margin-left: 6px; background: #000; }
.line-long { width: 75px; }
.combo-off select { padding-left: 13px; color: #858585; opacity: 1; }
.combo-off .chev { stroke: #c0c0c0; }

/* drawing area */
.work { flex: 1; min-height: 0; display: flex; background: #5c5c5c; }
.view { flex: 1; min-width: 0; display: grid; grid-template: minmax(0, 1fr) 21px / minmax(0, 1fr) 22px; background: #f0f0f0; }
.canvas { position: relative; overflow: hidden; background: #000; }
.drawing { position: absolute; inset: 0; }
.note { position: absolute; margin: 0; font: 300 27px/32px "Liberation Serif", "Noto Sans CJK SC", serif; color: #e4e4e4; white-space: nowrap; }
.note b { font: 300 22px/32px "Liberation Mono", monospace; }
.head-a { left: 332px; top: 36px; }
.head-b { left: 332px; top: 476px; }
.head-c { left: 1069px; top: 476px; }
.side-a { left: 53px; top: 216px; }
.side-b { left: 53px; top: 656px; }
.compass { position: absolute; right: 23px; top: 23px; width: 125px; height: 125px; border: 12px solid #2b2b2b; border-radius: 50%; font-size: 20px; line-height: 24px; color: #9a9a9a; display: grid; place-items: center; }
.compass span { position: absolute; }
.north { top: -19px; }
.south { bottom: -20px; }
.west { left: -19px; }
.east { right: -17px; }
.cube { width: 54px; height: 54px; border: 9px solid #9b9b9b; background: #9799a2; color: #3c3e46; font-size: 32px; line-height: 36px; font-weight: 300; }
.ucs { position: absolute; right: 53px; top: 176px; width: 69px; height: 21px; gap: 7px; border: 1px solid #85858d; border-radius: 5px; background: #9c9ca6; color: #6a6a72; font-size: 13px; }
.cross-h { position: absolute; left: 0; right: 0; top: 390px; height: 1px; background: #b400b4; }
.cross-v { position: absolute; top: 0; bottom: 0; left: 403px; width: 2px; background: #8c008c; }
.pick { position: absolute; left: 393px; top: 380px; width: 21px; height: 21px; border: 1px solid #b400b4; background: #000; }
.cursor { position: absolute; left: 403px; top: 391px; }
.floating { position: absolute; left: 0; top: 49px; display: flex; align-items: center; width: 356px; height: 29px; background: #5e5e5e; overflow: hidden; }
.floating .tool:first-child { margin-left: -14px; }
.floating .close { align-self: flex-start; margin: 4px 0 0; width: 8px; height: 6px; }
.vscroll { display: flex; justify-content: center; align-items: flex-start; }
.vscroll i { width: 6px; height: 21px; margin-top: 634px; background: #868686; }
.hscroll { grid-column: 1 / 3; display: flex; align-items: center; }
.hscroll i { width: 21px; height: 6px; margin-left: 291px; background: #868686; }

/* modify and draw-order palettes */
.side { flex: none; width: 34px; padding-left: 3px; }
.panel { display: flex; flex-direction: column; align-items: center; padding-top: 11px; border: 1px solid #3e3e3e; border-top: 0; }
.panel-order { margin-top: 1px; padding-top: 9px; border-top: 1px solid #3e3e3e; }
.grip-h { align-self: flex-start; width: 16px; height: 4px; margin: -8px 0 4px 2px; border: 1px solid #333; border-width: 1px 0; }
.rule { width: 26px; height: 2px; margin: 2px 0; background: #fff; }
.tool-abc { display: grid; justify-items: center; }
.tool-abc > * { grid-area: 1 / 1; }
.tool-abc span { align-self: start; justify-self: start; padding-left: 2px; font-size: 9px; line-height: 12px; color: #74a8cc; }

/* command window */
.command { flex: none; display: flex; flex-direction: column; padding-top: 3px; background: #5c5c5c; color: #111; }
.history { height: 45px; padding-top: 4px; border: 1px solid #828282; border-width: 1px 0; background: #c6c6c6; font: 15px/20px "DejaVu Sans Mono", monospace; text-indent: -4px; white-space: nowrap; overflow: hidden; }
.prompt { height: 28px; background: #fff; border-bottom: 1px solid #999; }

/* status bar */
.status { flex: none; display: flex; align-items: center; gap: 3px; height: 33px; margin-top: 26px; border: 1px solid #7a7a7a; border-width: 1px 0; background: #4a4a4a; box-shadow: 0 -26px #383838; overflow: hidden; }
.pair { display: flex; flex: none; }
.pair:first-child { margin-left: -5px; }
.st { width: 28px; height: 29px; }
.st svg { width: 22px; height: 22px; }
.on { background: #5c8fc4; }
.dim { opacity: .6; }
.dd { width: 18px; height: 29px; }
.dd svg, .scale svg, .units svg { width: 9px; height: 6px; }
.vs { flex: none; width: 1px; height: 30px; margin: 0 -1px; background: #777; }
.vs-push { margin-left: auto; }
.dense { display: flex; gap: 2px; }
.scale { width: 86px; justify-content: flex-end; gap: 5px; padding-right: 5px; font-size: 14px; }
.units { display: grid; align-items: center; width: 85px; font-size: 15px; font-weight: 500; }
.units > * { grid-area: 1 / 1; }
.units select { appearance: none; padding-left: 4px; }
.units svg { justify-self: end; margin-right: 3px; pointer-events: none; }
```
